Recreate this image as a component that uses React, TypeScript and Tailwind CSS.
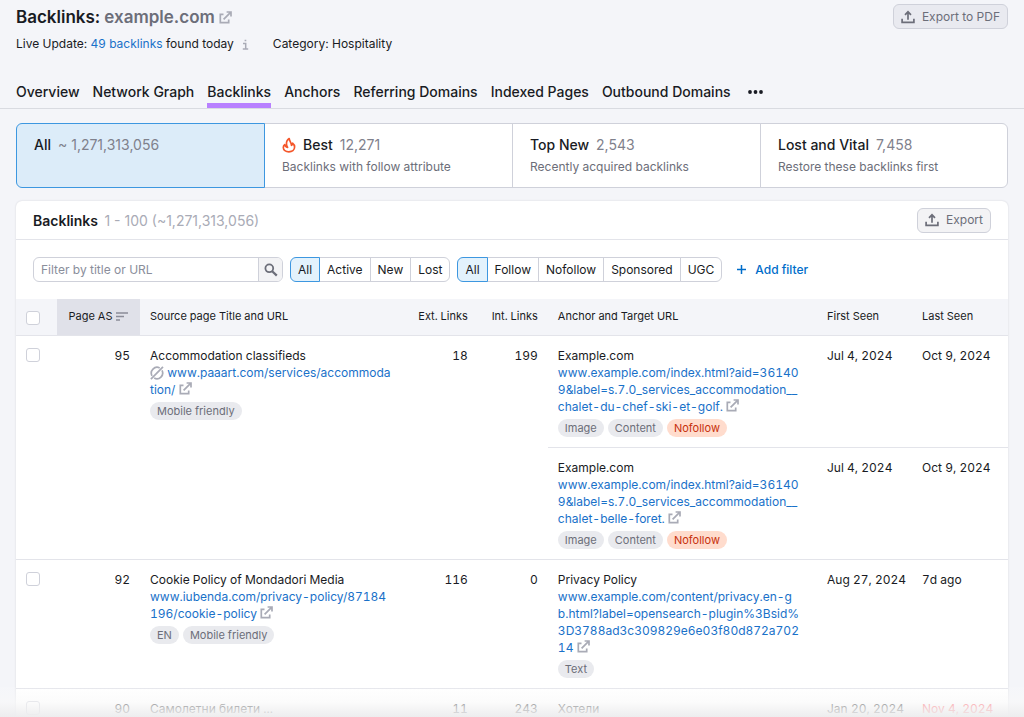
import React from "react";

function ExternalIcon({ className = "" }: { className?: string }) {
  return (
    <svg viewBox="0 0 13 13" className={className} width="13" height="13" fill="none" stroke="currentColor" strokeWidth="1.7" aria-hidden="true">
      <path d="M4.5 3.3H1.3v8.4h8.4V8.6" />
      <path d="M4.6 8.4 11.6 1.4M7.6 1h4.4v4.4" />
    </svg>
  );
}

function ExportIcon() {
  return (
    <svg viewBox="0 0 14 14" width="14" height="14" fill="none" stroke="currentColor" strokeWidth="1.7" aria-hidden="true">
      <path d="M1.1 8.8v3.6h11.8V8.8" />
      <path d="M7 9.8V2M4 4.8 7 1.8l3 3" />
    </svg>
  );
}

function FlameIcon() {
  return (
    <svg viewBox="0 0 14 16" width="14" height="16" fill="none" stroke="#f4562a" strokeWidth="1.7" strokeLinejoin="round" strokeLinecap="round" aria-hidden="true">
      <path d="M7.2 1.5C5 2.8 4.3 4.9 4.5 7.2c.1 1.2.3 2.3 1.1 3.2-1.5-.2-2.6-1.2-2.9-2.7C1.7 8.5 1.3 9.5 1.3 10.5c0 2.5 2.5 4.3 5.6 4.3s5.7-1.8 5.7-4.7c0-1.7-.8-3-2-3.9 0 1-.3 1.7-1.1 2.2C9.5 5.5 7.4 4.4 7.2 1.5Z" />
    </svg>
  );
}

function BlockedIcon() {
  return (
    <svg viewBox="0 0 14 14" width="14" height="14" fill="none" stroke="currentColor" strokeWidth="1.7" className="inline-block align-[-3px] text-[#a9abb6]" aria-hidden="true">
      <path d="M9.7 1.9A5.8 5.8 0 0 0 2 9.8M4.2 12.1A5.8 5.8 0 0 0 12 4.3" />
      <path d="M13 .8.9 13.2" />
    </svg>
  );
}

function SearchIcon() {
  return (
    <svg viewBox="0 0 14 14" width="14" height="14" fill="none" stroke="#6c6e79" strokeWidth="1.8" aria-hidden="true">
      <circle cx="5.3" cy="5.3" r="3.9" />
      <path d="m8.2 8.2 4.6 4.4" strokeWidth="2.2" />
    </svg>
  );
}

const tabs = ["Overview", "Network Graph", "Backlinks", "Anchors", "Referring Domains", "Indexed Pages", "Outbound Domains"];

const cards = [
  { title: "All", count: "~ 1,271,313,056", note: "", flame: false },
  { title: "Best", count: "12,271", note: "Backlinks with follow attribute", flame: true },
  { title: "Top New", count: "2,543", note: "Recently acquired backlinks", flame: false },
  { title: "Lost and Vital", count: "7,458", note: "Restore these backlinks first", flame: false },
];

function Segmented({ label, items }: { label: string; items: string[] }) {
  return (
    <div role="group" aria-label={label} className="flex h-[25px]">
      {items.map((item, i) => (
        <button
          key={item}
          type="button"
          aria-pressed={i === 0}
          className={
            i === 0
              ? "relative rounded-l-md border border-[#3d97e0] bg-[#e3f2fc] px-[7px]"
              : "-ml-px border border-[#cfd1da] bg-white px-[7px] last:rounded-r-md"
          }
        >
          {item}
        </button>
      ))}
    </div>
  );
}

function Tag({ text }: { text: string }) {
  const tone = text === "Nofollow" ? "bg-[#ffdccd] text-[#c7300b]" : "bg-[#e9eaee] text-[#6c6e79]";
  return <span className={`rounded-full px-[7px] text-[11px] leading-[18px] ${tone}`}>{text}</span>;
}

type LinkInfo = { title: string; url: string; tags: string[]; blocked?: boolean };

function LinkCell({ title, url, tags, blocked }: LinkInfo) {
  return (
    <>
      <div>{title}</div>
      {url && (
        <div className="break-all text-[#1971c9]">
          {blocked && <BlockedIcon />}
          {blocked && " "}
          <a href="#">{url}</a> <ExternalIcon className="inline-block align-[-1px] text-[#a9abb6]" />
        </div>
      )}
      {tags.length > 0 && (
        <div className="mt-1 flex gap-1">
          {tags.map((t) => (
            <Tag key={t} text={t} />
          ))}
        </div>
      )}
    </>
  );
}

type Target = LinkInfo & { first: string; last: string; lost?: boolean };
type Row = { score: number; source: LinkInfo; ext: number; int: number; targets: Target[] };

const rows: Row[] = [
  {
    score: 95,
    source: { title: "Accommodation classifieds", url: "www.paaart.com/services/accommodation/", tags: ["Mobile friendly"], blocked: true },
    ext: 18,
    int: 199,
    targets: [
      {
        title: "Example.com",
        url: "www.example.com/index.html?aid=361409&label=s.7.0_services_accommodation__chalet-du-chef-ski-et-golf.",
        tags: ["Image", "Content", "Nofollow"],
        first: "Jul 4, 2024",
        last: "Oct 9, 2024",
      },
      {
        title: "Example.com",
        url: "www.example.com/index.html?aid=361409&label=s.7.0_services_accommodation__chalet-belle-foret.",
        tags: ["Image", "Content", "Nofollow"],
        first: "Jul 4, 2024",
        last: "Oct 9, 2024",
      },
    ],
  },
  {
    score: 92,
    source: { title: "Cookie Policy of Mondadori Media", url: "www.iubenda.com/privacy-policy/87184196/cookie-policy", tags: ["EN", "Mobile friendly"] },
    ext: 116,
    int: 0,
    targets: [
      {
        title: "Privacy Policy",
        url: "www.example.com/content/privacy.en-gb.html?label=opensearch-plugin%3Bsid%3D3788ad3c309829e6e03f80d872a70214",
        tags: ["Text"],
        first: "Aug 27, 2024",
        last: "7d ago",
      },
    ],
  },
  {
    score: 90,
    source: { title: "Самолетни билети ...", url: "", tags: [] },
    ext: 11,
    int: 243,
    targets: [{ title: "Хотели", url: "", tags: [], first: "Jan 20, 2024", last: "Nov 4, 2024", lost: true }],
  },
];

function Checkbox({ label }: { label: string }) {
  return <input type="checkbox" aria-label={label} className="block size-[14px] appearance-none rounded-[3px] border border-[#cfd1da] bg-white checked:bg-[#1971c9]" />;
}

const cell = "border-b border-[#e3e4ea] pl-[10px] pt-[11px] pb-[10px] align-top";

export default function App() {
  return (
    <div className="relative h-screen overflow-hidden bg-[#f4f5f9] font-['Inter',sans-serif] text-[12px] text-[#191b23]">
      <header className="border-b border-[#d9dbe1]">
        <div className="flex items-start justify-between px-4 pt-1">
          <div>
            <h1 className="flex items-center text-[17px] leading-[26px] font-semibold">
              Backlinks:
              <span className="ml-1 text-[#6c6e79]">example.com</span>
              <a href="#" aria-label="Open example.com" className="ml-1 text-[#a9abb6]">
                <ExternalIcon />
              </a>
            </h1>
            <p className="mt-[5px] flex items-center leading-[18px]">
              <span>
                Live Update: <a href="#" className="text-[#1971c9]">49 backlinks</a> found today
              </span>
              <svg viewBox="0 0 7 11" width="7" height="11" className="ml-2 text-[#a9abb6]" fill="none" stroke="currentColor" strokeWidth="1.5" aria-hidden="true">
                <path d="M1 4.4h2.7v5.3M.8 9.900h5.400M2.600 1.400h1.700" />
              </svg>
              <span className="ml-6">Category: Hospitality</span>
            </p>
          </div>
          <button type="button" className="flex h-[25px] items-center gap-[7px] rounded-md border border-[#cfd1da] bg-[#e9eaf0] px-[7px] text-[#6c6e79]">
            <ExportIcon />
            Export to PDF
          </button>
        </div>
        <nav className="mt-[25px] flex gap-[13px] px-4 text-[14px] font-medium">
          {tabs.map((t) => (
            <a
              key={t}
              href="#"
              className={t === "Backlinks" ? "border-b-[5px] border-[#b880ff] pt-[3px] pb-px leading-[21px]" : "border-b-[5px] border-transparent pt-[3px] pb-px leading-[21px]"}
            >
              {t}
            </a>
          ))}
          <button type="button" aria-label="More reports" className="ml-1 flex h-[27px] items-center">
            <svg viewBox="0 0 15 4" width="15" height="4" fill="currentColor" aria-hidden="true">
              <circle cx="2" cy="2" r="1.9" />
              <circle cx="7.5" cy="2" r="1.9" />
              <circle cx="13" cy="2" r="1.9" />
            </svg>
          </button>
        </nav>
      </header>

      <main className="px-4 pt-[14px]">
        <div className="grid grid-cols-4">
          {cards.map((c, i) => (
            <button
              key={c.title}
              type="button"
              className={
                i === 0
                  ? "relative -mr-px flex h-[65px] flex-col rounded-l-md border border-[#3d97e0] bg-[#dcecf9] px-[17px] pt-[11px] text-left"
                  : "-mr-px flex h-[65px] flex-col border border-[#cfd1da] bg-white px-[17px] pt-[11px] text-left last:mr-0 last:rounded-r-md"
              }
            >
              <span className="flex items-center gap-[7px] text-[14px] leading-[20px]">
                {c.flame && <FlameIcon />}
                <span className="font-medium">{c.title}</span>
                <span className="text-[#7f818c]">{c.count}</span>
              </span>
              <span className="mt-[3px] leading-[18px] text-[#6c6e79]">{c.note}</span>
            </button>
          ))}
        </div>

        <section className="mt-[13px] rounded-t-md bg-white shadow-[0_0_2px_rgba(25,27,35,0.16)]">
          <div className="flex h-[39px] items-center justify-between border-b border-[#e3e4ea] px-[17px]">
            <h2 className="text-[14px] font-semibold">
              Backlinks <span className="ml-[3px] font-normal text-[#a9abb6]">1 - 100 (~1,271,313,056)</span>
            </h2>
            <button type="button" className="flex h-[25px] items-center gap-[7px] rounded-md border border-[#cfd1da] bg-[#f3f3f5] px-[7px] text-[#6c6e79]">
              <ExportIcon />
              Export
            </button>
          </div>
          <div className="flex items-center gap-[7px] p-[17px]">
            <div className="flex h-[25px] w-[250px] overflow-hidden rounded-md border border-[#cfd1da]">
              <input type="text" aria-label="Filter by title or URL" placeholder="Filter by title or URL" className="min-w-0 flex-1 px-[7px] outline-none placeholder:text-[#8a8e9b]" />
              <button type="button" aria-label="Search" className="flex w-6 items-center justify-center border-l border-[#cfd1da] bg-[#f3f3f5]">
                <SearchIcon />
              </button>
            </div>
            <Segmented label="Link status" items={["All", "Active", "New", "Lost"]} />
            <Segmented label="Link type" items={["All", "Follow", "Nofollow", "Sponsored", "UGC"]} />
            <button type="button" className="ml-2 flex items-center gap-[9px] font-medium text-[#006dca]">
              <svg viewBox="0 0 9 9" width="9" height="9" stroke="currentColor" strokeWidth="1.5" aria-hidden="true">
                <path d="M4.5 0v9M0 4.5h9" />
              </svg>
              Add filter
            </button>
          </div>

          <table className="w-full table-fixed border-separate border-spacing-0 leading-[17px] tabular-nums">
            <colgroup>
              <col className="w-[41px]" />
              <col className="w-[83px]" />
              <col className="w-[26.8%]" />
              <col className="w-[72px]" />
              <col className="w-[70px]" />
              <col />
              <col className="w-[95px]" />
              <col className="w-[96px]" />
            </colgroup>
            <thead>
              <tr className="h-[37px] bg-[#f4f5f9] text-left text-[11px] [&>th]:border-b [&>th]:border-[#e3e4ea] [&>th]:px-[10px] [&>th]:pb-[2px] [&>th]:font-normal [&>th]:whitespace-nowrap">
                <th scope="col">
                  <div className="pt-[3px]">
                    <Checkbox label="Select all rows" />
                  </div>
                </th>
                <th scope="col" className="bg-[#e0e1e9]">
                  <span className="flex items-center justify-center gap-1">
                    Page AS
                    <svg viewBox="0 0 12 9" width="12" height="9" stroke="#8a8c98" strokeWidth="1.6" aria-hidden="true">
                      <path d="M0 1h12M0 4.500h8M0 8h4" />
                    </svg>
                  </span>
                </th>
                <th scope="col">Source page Title and URL</th>
                <th scope="col" className="text-right">Ext. Links</th>
                <th scope="col" className="text-right">Int. Links</th>
                <th scope="col">Anchor and Target URL</th>
                <th scope="col">First Seen</th>
                <th scope="col">Last Seen</th>
              </tr>
            </thead>
            <tbody>
              {rows.map((row) =>
                row.targets.map((t, i) => (
                  <tr key={`${row.score}-${i}`}>
                    {i === 0 && (
                      <>
                        <td rowSpan={row.targets.length} className={cell}>
                          <div className="pt-px">
                            <Checkbox label={`Select ${row.source.title}`} />
                          </div>
                        </td>
                        <td rowSpan={row.targets.length} className={`${cell} pr-[10px] text-right`}>{row.score}</td>
                        <td rowSpan={row.targets.length} className={`${cell} pr-[14px]`}>
                          <LinkCell {...row.source} />
                        </td>
                        <td rowSpan={row.targets.length} className={`${cell} pr-[10px] text-right`}>{row.ext}</td>
                        <td rowSpan={row.targets.length} className={`${cell} pr-[10px] text-right`}>{row.int}</td>
                      </>
                    )}
                    <td className={`${cell} pr-[17px]`}>
                      <LinkCell title={t.title} url={t.url} tags={t.tags} />
                    </td>
                    <td className={`${cell} whitespace-nowrap`}>{t.first}</td>
                    <td className={t.lost ? `${cell} whitespace-nowrap text-[#ff4953]` : `${cell} whitespace-nowrap`}>{t.last}</td>
                  </tr>
                )),
              )}
            </tbody>
          </table>
        </section>
      </main>
      <div className="pointer-events-none absolute inset-x-0 bottom-0 h-[30px] bg-linear-to-b from-white/10 via-[#f9f9f9]/60 to-[#ededee]" />
    </div>
  );
}
